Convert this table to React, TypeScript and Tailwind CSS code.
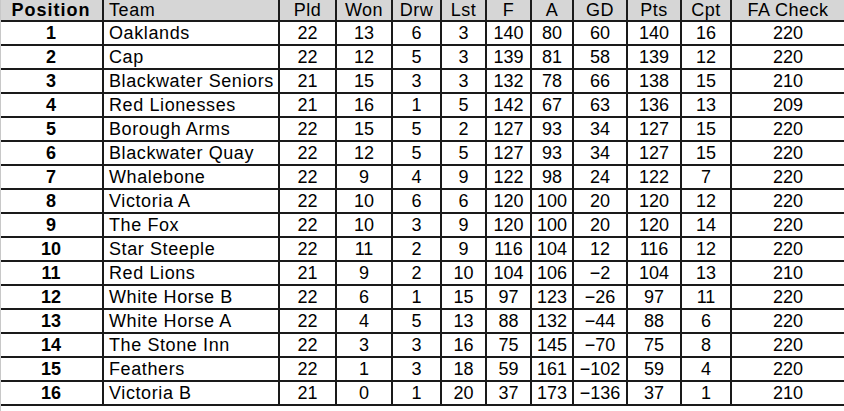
import React from "react";

const rows: (string | number)[][] = [
  [1, "Oaklands", 22, 13, 6, 3, 140, 80, 60, 140, 16, 220],
  [2, "Cap", 22, 12, 5, 3, 139, 81, 58, 139, 12, 220],
  [3, "Blackwater Seniors", 21, 15, 3, 3, 132, 78, 66, 138, 15, 210],
  [4, "Red Lionesses", 21, 16, 1, 5, 142, 67, 63, 136, 13, 209],
  [5, "Borough Arms", 22, 15, 5, 2, 127, 93, 34, 127, 15, 220],
  [6, "Blackwater Quay", 22, 12, 5, 5, 127, 93, 34, 127, 15, 220],
  [7, "Whalebone", 22, 9, 4, 9, 122, 98, 24, 122, 7, 220],
  [8, "Victoria A", 22, 10, 6, 6, 120, 100, 20, 120, 12, 220],
  [9, "The Fox", 22, 10, 3, 9, 120, 100, 20, 120, 14, 220],
  [10, "Star Steeple", 22, 11, 2, 9, 116, 104, 12, 116, 12, 220],
  [11, "Red Lions", 21, 9, 2, 10, 104, 106, -2, 104, 13, 210],
  [12, "White Horse B", 22, 6, 1, 15, 97, 123, -26, 97, 11, 220],
  [13, "White Horse A", 22, 4, 5, 13, 88, 132, -44, 88, 6, 220],
  [14, "The Stone Inn", 22, 3, 3, 16, 75, 145, -70, 75, 8, 220],
  [15, "Feathers", 22, 1, 3, 18, 59, 161, -102, 59, 4, 220],
  [16, "Victoria B", 21, 0, 1, 20, 37, 173, -136, 37, 1, 210],
];

const headers = ["Position", "Team", "Pld", "Won", "Drw", "Lst", "F", "A", "GD", "Pts", "Cpt", "FA Check"];

const gridCls =
  "grid grid-cols-[104px_176px_57px_56px_49px_45px_45px_42px_54px_54px_50px_112px]";

function fmt(v: string | number) {
  if (typeof v === "number" && v < 0) return "\u2212" + Math.abs(v);
  return String(v);
}

export default function App() {
  return (
    <div
      className="w-[844px] h-[411px] bg-white text-black overflow-hidden relative"
      style={{ fontFamily: '"Liberation Sans", Arial, sans-serif' }}
    >
      <div className="absolute left-0 top-0 bottom-0 w-px bg-[#c8c8c8]" />
      <div className={`${gridCls} h-[22px] bg-[#d6d6d6] border-b-2 border-[#1a1a1a]`}>
        {headers.map((h, i) => (
          <div
            key={h}
            className={`flex items-center text-[18px] leading-none whitespace-nowrap ${
              i < headers.length - 1 ? "border-r-2 border-[#1a1a1a]" : ""
            } ${
              i === 0
                ? "justify-center font-bold tracking-[1px]"
                : i === 1
                ? "pl-[5px] tracking-[0.6px]"
                : "justify-center tracking-[0.5px]"
            }`}
          >
            {h}
          </div>
        ))}
      </div>
      {rows.map((r, ri) => (
        <div key={ri} className={`${gridCls} h-[24px] border-b-2 border-[#1a1a1a]`}>
          {r.map((c, i) => (
            <div
              key={i}
              className={`flex items-center text-[18px] leading-none ${
                i < r.length - 1 ? "border-r-2 border-[#1a1a1a]" : ""
              } ${
                i === 0
                  ? "justify-center font-bold"
                  : i === 1
                  ? "pl-[5px] whitespace-nowrap tracking-[0.6px]"
                  : "justify-center"
              }`}
            >
              {fmt(c)}
            </div>
          ))}
        </div>
      ))}
    </div>
  );
}
